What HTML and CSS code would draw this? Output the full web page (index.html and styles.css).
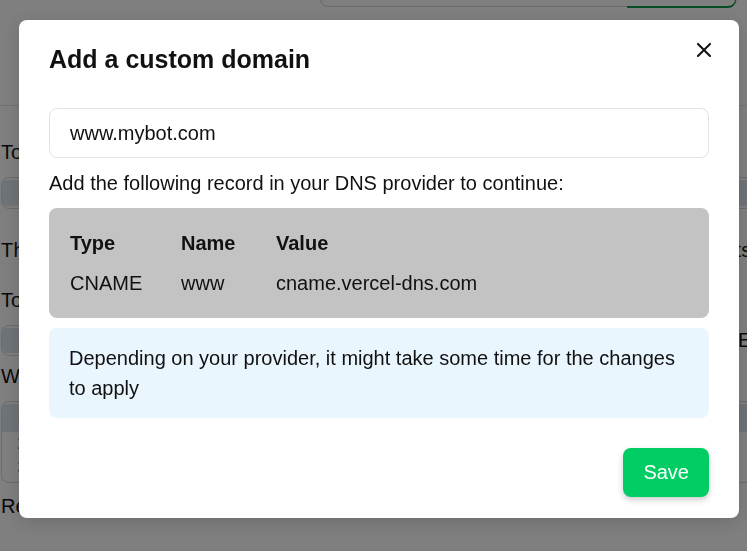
FILE: index.html
```html
<!DOCTYPE html>
<html lang="en">
<head>
    <meta charset="UTF-8">
    <meta name="viewport" content="width=device-width, initial-scale=1.0">
    <title>Bot settings</title>
    <link rel="stylesheet" href="styles.css">
</head>
<body>
    <div class="page">
        <header class="topbar">
            <div class="search">
                <span class="search-btn"></span>
            </div>
        </header>
        <main class="form">
            <div class="label first">To whom should the bot respond?</div>
            <div class="editor box-one">
                <div class="line active"><span class="num">1</span><span class="code"></span></div>
            </div>
            <div class="label long">The bot will reply in the same language as the message it receives, with short texts</div>
            <div class="label tight">Tone of voice</div>
            <div class="editor-row">
                <div class="editor box-two">
                    <div class="line active"><span class="num">1</span><span class="code"></span></div>
                </div>
                <span class="edit">Edit</span>
            </div>
            <div class="label close">What should it say?</div>
            <div class="editor box-three">
                <div class="line active"><span class="num">1</span><span class="code"></span></div>
                <div class="line"><span class="num">2</span><span class="code"></span></div>
                <div class="line"><span class="num">3</span><span class="code"></span></div>
            </div>
            <div class="label last">Replies</div>
        </main>
    </div>

    <!-- Custom domain modal -->
    <div class="overlay">
        <div class="modal">
            <div class="modal-header">
                <h2>Add a custom domain</h2>
                <button class="modal-close" aria-label="Close">
                    <svg width="14" height="14" viewBox="0 0 14 14">
                        <path d="M1 1L13 13M13 1L1 13" stroke="#111" stroke-width="2" stroke-linecap="square"/>
                    </svg>
                </button>
            </div>
            <div class="modal-body">
                <input class="domain-input" type="text" value="www.mybot.com">
                <p class="hint">Add the following record in your DNS provider to continue:</p>
                <div class="records">
                    <span class="head">Type</span>
                    <span class="head">Name</span>
                    <span class="head">Value</span>
                    <span>CNAME</span>
                    <span>www</span>
                    <span>cname.vercel-dns.com</span>
                </div>
                <div class="notice">Depending on your provider, it might take some time for the changes to apply</div>
            </div>
            <div class="modal-footer">
                <button class="save-btn">Save</button>
            </div>
        </div>
    </div>
</body>
</html>
```

FILE: styles.css
```css
body {
    margin: 0;
    padding: 0;
    font-family: 'Liberation Sans', Arial, sans-serif;
    color: #111;
    background: #fff;
    overflow: hidden;
}
.page {
    width: 100%;
    height: 551px;
    overflow: hidden;
}
.topbar {
    display: flex;
    align-items: flex-start;
    height: 105px;
    border-bottom: 1px solid #e6e6e6;
}
.search {
    margin-left: 320px;
    margin-top: -40px;
    width: 415px;
    height: 45px;
    border: 1px solid #d0d0d0;
    border-radius: 0 0 8px 8px;
    display: flex;
    justify-content: flex-end;
}
.search-btn {
    width: 108px;
    height: 100%;
    border-bottom: 2px solid #0a9a4a;
    border-right: 1px solid #0a9a4a;
    border-radius: 0 0 8px 0;
}
.form {
    padding-left: 1px;
}
.label {
    font-size: 20px;
    line-height: 24px;
    white-space: nowrap;
}
.label.first {
    margin-top: 34px;
}
.label.long {
    margin-top: 29px;
    letter-spacing: 0.2px;
}
.label.tight {
    margin-top: 26px;
}
.label.close {
    margin-top: 8px;
}
.label.last {
    margin-top: 11px;
}
.editor {
    margin-top: 13px;
    width: 780px;
    border: 1px solid #d8d8d8;
    border-radius: 8px;
    overflow: hidden;
    padding: 2px 0;
}
.box-one .line {
    height: 26px;
}
.box-two .line {
    height: 25px;
}
.editor-row {
    display: flex;
    align-items: center;
    gap: 5px;
    margin-top: 13px;
}
.editor-row .editor {
    margin-top: 0;
    width: 730px;
    flex-shrink: 0;
}
.edit {
    font-size: 20px;
    white-space: nowrap;
}
.line {
    display: flex;
    align-items: center;
    height: 24px;
    font-size: 16px;
    color: #555;
}
.line.active {
    background: #dfe8f2;
}
.num {
    width: 40px;
    text-align: center;
}
.box-three .line {
    height: 24px;
}
.box-three .line.active {
    height: 28px;
}

.overlay {
    position: fixed;
    top: 0;
    left: 0;
    width: 100%;
    height: 100%;
    background: rgba(0, 0, 0, 0.5);
}
.modal {
    margin: 20px 0 0 19px;
    width: 720px;
    box-sizing: border-box;
    background: #fff;
    border-radius: 8px;
    padding: 20px 30px 21px;
    box-shadow: 0 4px 20px rgba(0, 0, 0, 0.15);
}
.modal-header {
    display: flex;
    justify-content: space-between;
    align-items: flex-start;
    height: 40px;
    margin-bottom: 28px;
}
.modal-header h2 {
    margin: 0;
    font-size: 25px;
    line-height: 38px;
    font-weight: bold;
    color: #111;
}
.modal-close {
    border: none;
    background: none;
    padding: 0;
    margin: 3px -2px 0 0;
    width: 14px;
    height: 14px;
    cursor: pointer;
    display: flex;
}
.modal-body {
    display: flex;
    flex-direction: column;
    gap: 10px;
}
.domain-input {
    box-sizing: border-box;
    width: 100%;
    height: 50px;
    border: 1px solid #e2e2e2;
    border-radius: 8px;
    padding: 0 20px;
    font-family: inherit;
    font-size: 20px;
    color: #111;
    outline: none;
}
.hint {
    margin: 0;
    font-size: 20px;
    line-height: 30px;
}
.records {
    background: #c3c3c3;
    border-radius: 8px;
    padding: 20px 21px;
    display: grid;
    grid-template-columns: 111px 95px auto;
    row-gap: 10px;
    font-size: 20px;
    line-height: 30px;
    color: #111;
}
.records .head {
    font-weight: bold;
}
.notice {
    background: #eaf6fe;
    border-radius: 8px;
    padding: 15px 20px;
    font-size: 20px;
    line-height: 30px;
    color: #111;
}
.modal-footer {
    display: flex;
    justify-content: flex-end;
    margin-top: 30px;
}
.save-btn {
    height: 49px;
    padding: 0 20px;
    border: none;
    border-radius: 8px;
    background: #00ce64;
    color: #fff;
    font-family: inherit;
    font-size: 20px;
    box-shadow: 0 3px 6px rgba(0, 0, 0, 0.2);
    cursor: pointer;
}
```
